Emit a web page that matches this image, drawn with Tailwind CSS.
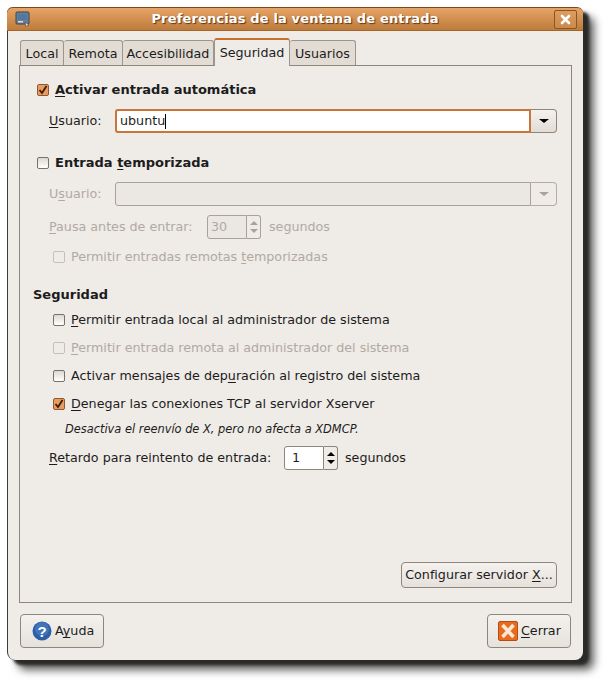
<!DOCTYPE html>
<html lang="es">
<head>
<meta charset="UTF-8">
<title>Preferencias de la ventana de entrada</title>
<script src="https://cdn.jsdelivr.net/npm/@tailwindcss/browser@4"></script>
</head>
<body class="bg-white w-[607px] h-[684px] overflow-hidden font-['DejaVu_Sans',sans-serif] text-[12.7px] text-[#1c1c1c] [&_u]:underline-offset-2">
<div class="pt-[7px] pl-[7px]">
  <!-- ventana -->
  <div class="w-[576px] h-[653px] flex flex-col bg-[#efebe7] rounded-t-[6px] rounded-b-[8px] border-l border-[#3c3b37] shadow-[6px_5px_3px_#2a2a28,11px_10px_9px_rgba(40,40,38,0.75)]">
    <!-- titulo -->
    <div class="h-[24px] shrink-0 -ml-px flex items-center pl-[8px] pr-[6px] rounded-t-[6px] border-t border-[#7a4a1c] border-b-[#a5662b] border-b bg-gradient-to-b from-[#e6a566] to-[#bd7b3c]">
      <svg width="16" height="16" viewBox="0 0 16 16" class="shrink-0">
        <rect x="1" y="1" width="13" height="12" rx="1" fill="#6f7f8f" stroke="#3d4650"/>
        <rect x="3" y="3" width="9" height="6" fill="#4f78a6"/>
        <rect x="3" y="10" width="5" height="1.5" fill="#d5dbe0"/>
        <path d="M10 11l4 3-2 .5-1 1.2z" fill="#e8e8e8" stroke="#333" stroke-width=".5"/>
      </svg>
      <div class="flex-1 text-center text-[13px] font-bold text-white tracking-[0.15px] [text-shadow:1px_1px_1px_#5c3513] pl-[5px]">Preferencias de la ventana de entrada</div>
      <div class="w-[23px] h-[19px] shrink-0 flex items-center justify-center rounded-[2px] border border-[#8a5526] bg-[#d89a5c]/40">
        <svg width="11" height="11" viewBox="0 0 11 11"><path d="M2 2l7 7M9 2l-7 7" stroke="#fff" stroke-width="2.6" stroke-linecap="round"/></svg>
      </div>
    </div>

    <div class="flex-1 flex flex-col pl-[11px] pr-[11px]">
      <!-- pestañas -->
      <div class="h-[34px] shrink-0 flex items-end pl-px">
        <div class="h-[25px] w-[44px] flex items-center justify-center pt-px border border-b-0 border-[#9c958c] rounded-t-[3px] bg-[#e2dcd5]">Local</div>
        <div class="h-[25px] w-[59px] flex items-center justify-center pt-px border border-b-0 border-l-0 border-[#9c958c] rounded-t-[3px] bg-[#e2dcd5]">Remota</div>
        <div class="h-[25px] w-[91px] flex items-center justify-center pt-px border border-b-0 border-l-0 border-[#9c958c] rounded-t-[3px] bg-[#e2dcd5]">Accesibilidad</div>
        <div class="relative z-10 h-[28px] w-[76px] -mb-px flex items-center justify-center pb-px border-x border-[#9c958c] border-t-2 border-t-[#c8702a] rounded-t-[3px] bg-[#efebe7]">Seguridad</div>
        <div class="h-[25px] w-[66px] flex items-center justify-center pt-px border border-b-0 border-l-0 border-[#9c958c] rounded-t-[3px] bg-[#e2dcd5]">Usuarios</div>
      </div>

      <!-- pagina -->
      <div class="h-[538px] shrink-0 flex flex-col pl-[13px] pr-[14px] pb-[14px] border border-[#8d867d]">
        <div class="h-[24px] mt-[12px] flex items-center pl-[4px] gap-[6px] text-[13px] font-bold">
          <span class="w-[12px] h-[12px] shrink-0 flex items-center justify-center rounded-[2px] border border-[#8a5a35] bg-[#ee9a5c]"><svg width="10" height="10" viewBox="0 0 10 10"><path d="M1.5 5l2.5 3L8.5 1" fill="none" stroke="#2e2013" stroke-width="1.8"/></svg></span>
          <span><u>A</u>ctivar entrada automática</span>
        </div>
        <div class="h-[24px] mt-[7px] flex items-center pl-[16px]">
          <span class="w-[66px]"><u>U</u>suario:</span>
          <div class="flex-1 h-[24px] flex">
            <div class="flex-1 flex items-center pl-[3px] bg-white border-2 border-[#c9753a] rounded-l-[3px]">ubuntu<span class="w-px h-[15px] bg-black"></span></div>
            <div class="w-[26px] flex items-center justify-center border border-l-0 border-[#8d867d] rounded-r-[4px] bg-gradient-to-b from-[#f4f1ee] to-[#e2dcd5]"><span class="w-0 h-0 border-x-[5px] border-x-transparent border-t-[4px] border-t-black"></span></div>
          </div>
        </div>

        <div class="h-[24px] mt-[18px] flex items-center pl-[4px] gap-[6px] text-[13px] font-bold">
          <span class="w-[12px] h-[12px] shrink-0 rounded-[2px] border border-[#77716a] bg-gradient-to-b from-[#dcd8d3] to-white"></span>
          <span>Entrada <u>t</u>emporizada</span>
        </div>
        <div class="h-[24px] mt-[7px] flex items-center pl-[16px] text-[#b0aaa3]">
          <span class="w-[66px]">U<u>s</u>uario:</span>
          <div class="flex-1 h-[24px] flex">
            <div class="flex-1 bg-[#ebe7e2] border border-[#a8a29a] rounded-l-[3px]"></div>
            <div class="w-[26px] flex items-center justify-center border border-l-0 border-[#b3ada5] rounded-r-[4px] bg-[#efebe7]"><span class="w-0 h-0 border-x-[5px] border-x-transparent border-t-[4px] border-t-[#a8a29a]"></span></div>
          </div>
        </div>
        <div class="h-[24px] mt-[9px] flex items-center pl-[16px] text-[#b0aaa3]">
          <span class="w-[158px]"><u>P</u>ausa antes de entrar:</span>
          <div class="w-[54px] h-[24px] flex">
            <div class="flex-1 flex items-center pl-[3px] bg-[#ebe7e2] border border-[#a8a29a] rounded-l-[3px]">30</div>
            <div class="w-[14px] flex flex-col items-center justify-around py-[3px] border border-l-0 border-[#a8a29a] rounded-r-[3px]">
              <span class="w-0 h-0 border-x-[4px] border-x-transparent border-b-[4px] border-b-[#a8a29a]"></span>
              <span class="w-0 h-0 border-x-[4px] border-x-transparent border-t-[4px] border-t-[#a8a29a]"></span>
            </div>
          </div>
          <span class="ml-[8px]">segundos</span>
        </div>
        <div class="h-[24px] mt-[6px] flex items-center pl-[20px] gap-[6px] text-[#b0aaa3]">
          <span class="w-[12px] h-[12px] shrink-0 rounded-[2px] border border-[#c4bfb8]"></span>
          <span>Permitir entradas remotas <u>t</u>emporizadas</span>
        </div>

        <div class="h-[24px] mt-[14px] flex items-center text-[13px] font-bold">Seguridad</div>
        <div class="h-[24px] mt-[1px] flex items-center pl-[20px] gap-[6px]">
          <span class="w-[12px] h-[12px] shrink-0 rounded-[2px] border border-[#77716a] bg-gradient-to-b from-[#dcd8d3] to-white"></span>
          <span><u>P</u>ermitir entrada local al administrador de sistema</span>
        </div>
        <div class="h-[24px] mt-[4px] flex items-center pl-[20px] gap-[6px] text-[#b0aaa3]">
          <span class="w-[12px] h-[12px] shrink-0 rounded-[2px] border border-[#c4bfb8]"></span>
          <span><u>P</u>ermitir entrada remota al administrador del sistema</span>
        </div>
        <div class="h-[24px] mt-[4px] flex items-center pl-[20px] gap-[6px]">
          <span class="w-[12px] h-[12px] shrink-0 rounded-[2px] border border-[#77716a] bg-gradient-to-b from-[#dcd8d3] to-white"></span>
          <span>Activar mensajes de dep<u>u</u>ración al registro del sistema</span>
        </div>
        <div class="h-[24px] mt-[4px] flex items-center pl-[20px] gap-[6px]">
          <span class="w-[12px] h-[12px] shrink-0 flex items-center justify-center rounded-[2px] border border-[#8a5a35] bg-[#ee9a5c]"><svg width="10" height="10" viewBox="0 0 10 10"><path d="M1.5 5l2.5 3L8.5 1" fill="none" stroke="#2e2013" stroke-width="1.8"/></svg></span>
          <span><u>D</u>enegar las conexiones TCP al servidor Xserver</span>
        </div>
        <div class="h-[24px] mt-[2px] flex items-center pl-[32px] italic text-[11.4px]">Desactiva el reenvío de X, pero no afecta a XDMCP.</div>
        <div class="h-[24px] mt-[4px] flex items-center pl-[16px]">
          <span class="w-[235px]"><u>R</u>etardo para reintento de entrada:</span>
          <div class="w-[54px] h-[24px] flex">
            <div class="flex-1 flex items-center pl-[7px] bg-white border border-[#8d867d] rounded-l-[3px]">1</div>
            <div class="w-[14px] flex flex-col items-center justify-around py-[3px] border border-l-0 border-[#8d867d] rounded-r-[3px] bg-[#efebe7]">
              <span class="w-0 h-0 border-x-[4px] border-x-transparent border-b-[4px] border-b-black"></span>
              <span class="w-0 h-0 border-x-[4px] border-x-transparent border-t-[4px] border-t-black"></span>
            </div>
          </div>
          <span class="ml-[7px]">segundos</span>
        </div>
        <div class="mt-auto flex justify-end">
          <div class="w-[156px] h-[26px] flex items-center justify-center border border-[#8d867d] rounded-[4px] bg-gradient-to-b from-[#f4f1ee] to-[#e6e1db]"><span>Configurar servidor <u>X</u>...</span></div>
        </div>
      </div>

      <!-- botones -->
      <div class="mt-[11px] mx-px flex justify-between">
        <div class="w-[84px] h-[34px] flex items-center pl-[11px] gap-[3px] border border-[#8d867d] rounded-[4px] bg-gradient-to-b from-[#f4f1ee] to-[#e6e1db]">
          <svg width="20" height="20" viewBox="0 0 20 20" class="shrink-0">
            <circle cx="10" cy="10" r="9.5" fill="#2d5ea6"/>
            <circle cx="10" cy="8" r="7" fill="#4f83c4" opacity=".6"/>
            <text x="10" y="15.5" text-anchor="middle" font-family="Liberation Sans" font-weight="700" font-size="15" fill="#fff">?</text>
          </svg>
          <span>A<u>y</u>uda</span>
        </div>
        <div class="w-[84px] h-[34px] flex items-center pl-[10px] gap-[3px] border border-[#8d867d] rounded-[4px] bg-gradient-to-b from-[#f4f1ee] to-[#e6e1db]">
          <svg width="20" height="20" viewBox="0 0 20 20" class="shrink-0">
            <rect x=".5" y=".5" width="19" height="19" rx="1.5" fill="#e86a1e" stroke="#b84c10"/>
            <path d="M4.5 4l11 12M15.5 4l-11 12" stroke="#fde6d2" stroke-width="3.6"/>
          </svg>
          <span><u>C</u>errar</span>
        </div>
      </div>
    </div>
  </div>
</div>
</body>
</html>
